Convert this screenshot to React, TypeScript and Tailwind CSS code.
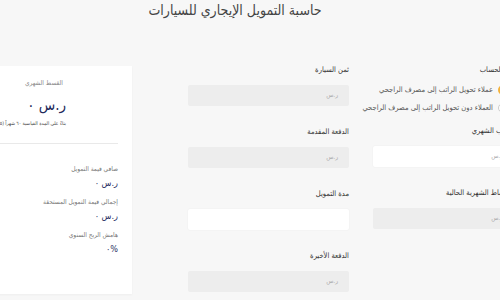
import React from 'react';

const font = { fontFamily: '"DejaVu Sans Condensed", "DejaVu Sans", sans-serif' };

type FieldProps = {
  label: string;
  white?: boolean;
  placeholder?: string;
  className?: string;
};

const Field = ({ label, white, placeholder, className = 'mt-[20px]' }: FieldProps) => (
  <div className={className}>
    <div className="h-[12px] text-[7.5px] leading-[12px] text-[#333] whitespace-nowrap">{label}</div>
    <div
      className={
        'mt-[9px] h-[21px] rounded-[2px] flex items-center pr-[11px] text-[6.5px] text-[#aaa] ' +
        (white ? 'bg-white shadow-[0_0_2px_rgba(0,0,0,0.06)]' : 'bg-[#ededed]')
      }
    >
      {placeholder}
    </div>
  </div>
);

const Stat = ({ label, value, first }: { label: string; value: string; first?: boolean }) => (
  <div className={first ? '' : 'mt-[8px]'}>
    <div className="text-[6.5px] leading-[10px] text-[#777]">{label}</div>
    <div className="mt-[3px] text-[9px] leading-[12px] text-[#2b3163]">{value}</div>
  </div>
);

export default function App() {
  return (
    <div className="w-[500px] h-[300px] overflow-hidden bg-[#f7f7f7]" style={font}>
      <h1 dir="rtl" className="h-[64px] pr-[30px] text-center text-[14px] leading-[20px] text-[#444]">
        حاسبة التمويل الإيجاري للسيارات
      </h1>

      <div dir="rtl" className="ml-[-30px] w-[544px] flex items-start gap-[24px]">
        {/* account type, salary, obligations */}
        <div className="w-[141px] shrink-0">
          <div className="h-[12px] text-[7.5px] leading-[12px] text-[#333] whitespace-nowrap">نوع الحساب</div>
          <div className="mt-[9px] pr-[6px] flex flex-col gap-[8px] text-[7.5px] leading-[10px] text-[#555]">
            <div className="flex items-center gap-[5px] whitespace-nowrap">
              <span className="w-[10px] h-[10px] rounded-full border-[3px] border-[#f3b23c] bg-white shrink-0" />
              <span>عملاء تحويل الراتب إلى مصرف الراجحي</span>
            </div>
            <div className="flex items-center gap-[5px] whitespace-nowrap">
              <span className="w-[10px] h-[10px] rounded-full border border-[#ccc] bg-white shrink-0" />
              <span>العملاء دون تحويل الراتب إلى مصرف الراجحي</span>
            </div>
          </div>
          <Field className="mt-[12px]" label="الراتب الشهري" placeholder="ر.س" white />
          <Field className="mt-[20px]" label="الأقساط الشهرية الحالية" placeholder="ر.س" />
        </div>

        {/* car price, payments, duration */}
        <div className="w-[161px] shrink-0">
          <Field className="" label="ثمن السيارة" placeholder="ر.س" />
          <Field label="الدفعة المقدمة" placeholder="ر.س" />
          <Field label="مدة التمويل" white />
          <Field label="الدفعة الأخيرة" placeholder="ر.س" />
        </div>

        {/* result card */}
        <div className="mr-[32px] w-[162px] shrink-0 mt-[2px] h-[228px] bg-white shadow-[0_1px_2px_rgba(0,0,0,0.04)]">
          <div className="pt-[12px] pr-[66px] text-right">
            <div className="pr-[3px] text-[6.5px] leading-[10px] text-[#888]">القسط الشهري</div>
            <div className="mt-[6px] text-[15px] leading-[22px] text-[#22295a]">ر.س ٠</div>
            <div className="mt-[2px] text-[5px] leading-[10px] text-[#444] whitespace-nowrap">
              بناءً على المدة القياسية ٦٠ شهراً (٥ سنة)
            </div>
          </div>
          <div className="mt-[15px] mx-[14px] border-t border-[#e9e9e9]" />
          <div className="mt-[20px] pr-[14px]">
            <Stat first label="صافي قيمة التمويل" value="ر.س ٠" />
            <Stat label="إجمالي قيمة التمويل المستحقة" value="ر.س ٠" />
            <Stat label="هامش الربح السنوي" value="%٠" />
          </div>
        </div>
      </div>
    </div>
  );
}
